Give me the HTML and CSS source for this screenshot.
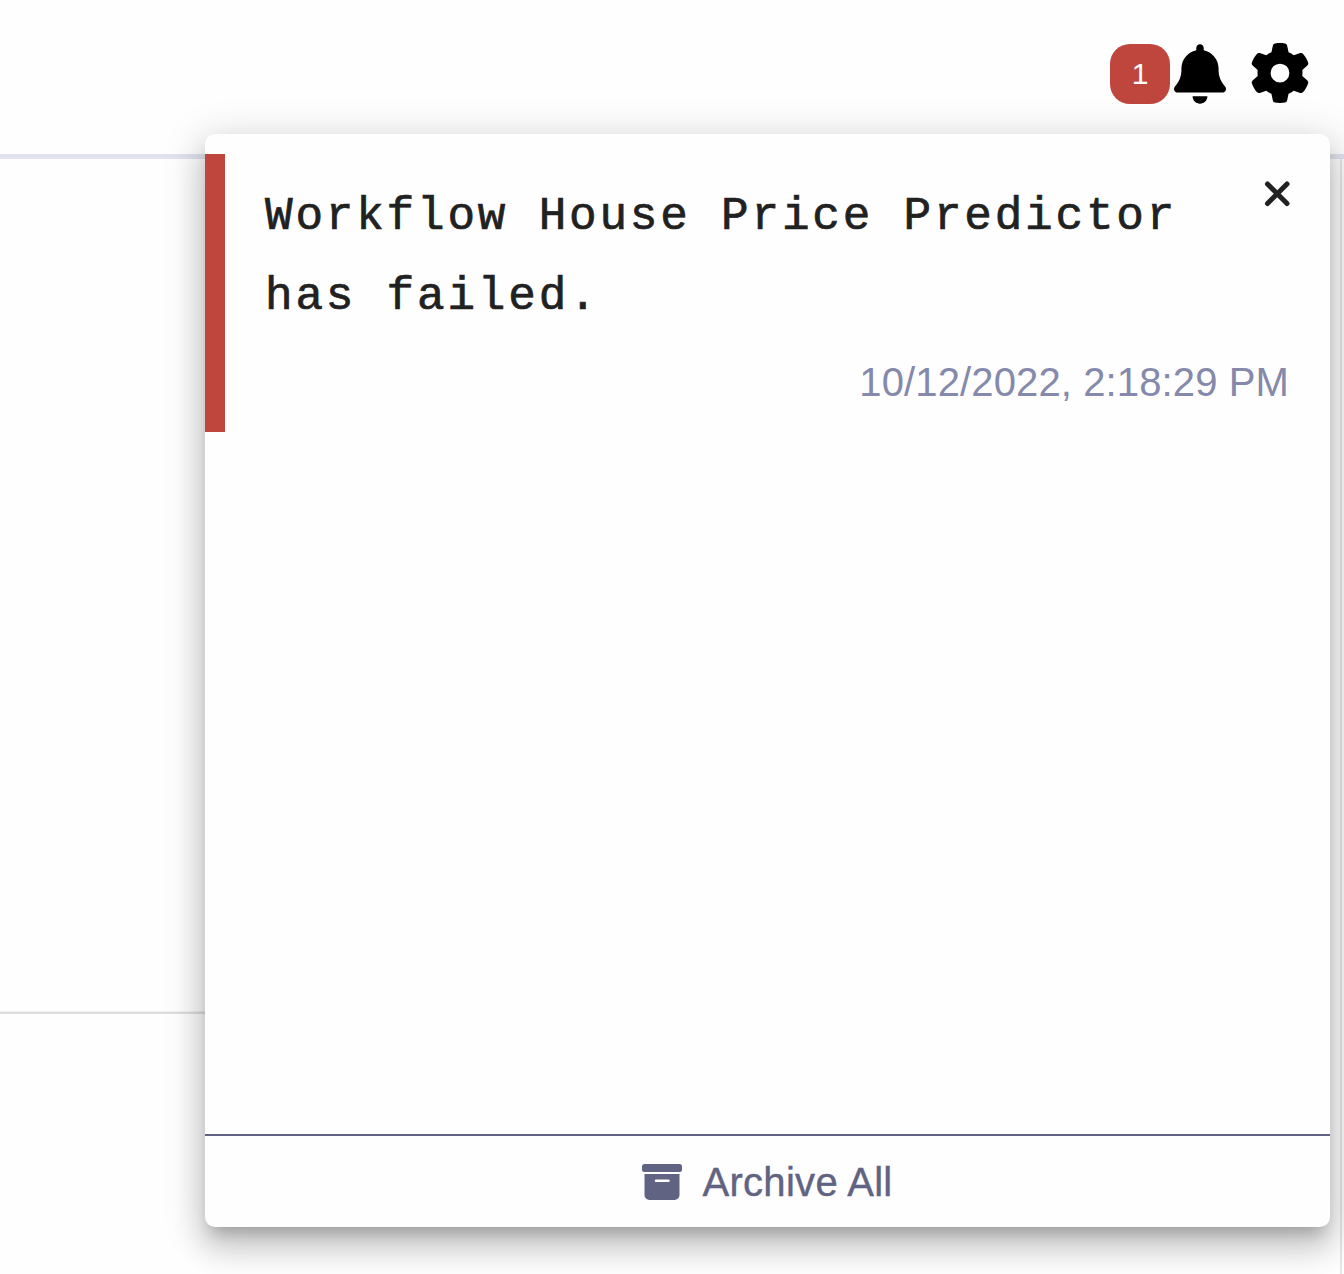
FILE: index.html
```html
<!DOCTYPE html>
<html lang="en">
<head>
<meta charset="utf-8">
<title>Notifications</title>
<link rel="stylesheet" href="styles.css">
</head>
<body>
<div class="page">
  <header class="toolbar">
    <button class="bell-button" aria-label="Notifications">
      <span class="badge">1</span>
      <svg class="bell" viewBox="0 0 448 512"><path d="M224 0c-17.7 0-32 14.3-32 32V51.2C119 66 64 130.6 64 208v18.8c0 47-17.3 92.4-48.5 127.6l-7.4 8.3c-8.4 9.4-10.4 22.9-5.3 34.4S19.4 416 32 416H416c12.6 0 24-7.4 29.2-18.9s3.1-25-5.3-34.4l-7.4-8.3C401.3 319.2 384 273.9 384 226.8V208c0-77.4-55-142-128-156.8V32c0-17.7-14.3-32-32-32zm45.3 493.3c12-12 18.7-28.3 18.7-45.3H224 160c0 17 6.7 33.3 18.7 45.3s28.3 18.7 45.3 18.7s33.3-6.7 45.3-18.7z"/></svg>
    </button>
    <button class="gear-button" aria-label="Settings">
      <svg class="gear" viewBox="0 0 512 512"><path d="M495.9 166.6c3.2 8.7 .5 18.4-6.4 24.6l-43.3 39.4c1.1 8.3 1.7 16.8 1.7 25.4s-.6 17.1-1.7 25.4l43.3 39.4c6.9 6.2 9.6 15.9 6.4 24.6c-4.4 11.9-9.7 23.3-15.8 34.3l-4.7 8.1c-6.6 11-14 21.4-22.1 31.2c-5.9 7.2-15.7 9.6-24.5 6.8l-55.7-17.7c-13.4 10.3-28.2 18.9-44 25.4l-12.5 57.1c-2 9.1-9 16.3-18.2 17.8c-13.8 2.3-28 3.5-42.5 3.5s-28.7-1.2-42.5-3.5c-9.2-1.5-16.2-8.7-18.2-17.8l-12.5-57.1c-15.8-6.5-30.6-15.1-44-25.4L83.1 425.9c-8.8 2.8-18.6 .3-24.5-6.8c-8.1-9.8-15.5-20.2-22.1-31.2l-4.7-8.1c-6.1-11-11.4-22.4-15.8-34.3c-3.2-8.7-.5-18.4 6.4-24.6l43.3-39.4C64.6 273.1 64 264.6 64 256s.6-17.1 1.7-25.4L22.4 191.2c-6.9-6.2-9.6-15.9-6.4-24.6c4.4-11.9 9.7-23.3 15.8-34.3l4.7-8.1c6.6-11 14-21.4 22.1-31.2c5.9-7.2 15.7-9.6 24.5-6.8l55.7 17.7c13.4-10.3 28.2-18.9 44-25.4l12.5-57.1c2-9.1 9-16.3 18.2-17.8C227.3 1.2 241.5 0 256 0s28.7 1.2 42.5 3.5c9.2 1.5 16.2 8.7 18.2 17.8l12.5 57.1c15.8 6.5 30.6 15.1 44 25.4l55.7-17.7c8.8-2.8 18.6-.3 24.5 6.8c8.1 9.8 15.5 20.2 22.1 31.2l4.7 8.1c6.1 11 11.4 22.4 15.8 34.3zM256 336a80 80 0 1 0 0-160 80 80 0 1 0 0 160z"/></svg>
    </button>
  </header>
  <main class="content">
    <div class="section"></div>
  </main>
  <section class="panel">
    <div class="list">
      <article class="notification">
        <div class="row">
          <p class="message">Workflow House Price Predictor has failed.</p>
          <button class="close" aria-label="Dismiss">
            <svg class="cross" viewBox="0 0 26 26"><path d="M3.500 3L23 22.500M23 3L3.500 22.500"/></svg>
          </button>
        </div>
        <time class="time">10/12/2022, 2:18:29 PM</time>
      </article>
    </div>
    <button class="archive">
      <svg class="box" viewBox="0 0 40 36"><rect width="40" height="8" rx="2.5"/><path fill-rule="evenodd" d="M2.500 10h35v21a5 5 0 0 1-5 5h-25a5 5 0 0 1-5-5zM14 15.500a1.250 1.250 0 0 0 0 2.500h12.500a1.250 1.250 0 0 0 0-2.500z"/></svg>
      <span class="archive-label">Archive All</span>
    </button>
  </section>
</div>
</body>
</html>
```
FILE: styles.css
```css
* { box-sizing: border-box; }
body {
  margin: 0;
  background: #fefefe;
  font-family: "Liberation Sans", Arial, sans-serif;
}
button {
  margin: 0;
  padding: 0;
  border: 0;
  background: none;
  font: inherit;
  color: inherit;
}
svg { display: block; }
.page {
  position: relative;
  display: flex;
  flex-direction: column;
  height: 1274px;
  overflow: hidden;
}
.toolbar {
  display: flex;
  justify-content: flex-end;
  align-items: flex-start;
  gap: 24px;
  height: 159px;
  padding: 43px 34px 0 0;
  border-bottom: 5px solid #e0e3ee;
}
.bell-button {
  display: flex;
  gap: 4px;
  padding-top: 1px;
}
.badge {
  display: flex;
  align-items: center;
  justify-content: center;
  width: 60px;
  height: 60px;
  border-radius: 20px;
  background: #bf463d;
  color: #fff;
  font-size: 30px;
}
.bell { width: 52px; height: 60px; }
.gear { width: 60px; height: 60px; }
.content {
  flex: 1;
  margin-right: 2px;
  border-right: 2px solid #e6e6e6;
}
.section {
  width: 50%;
  height: 855px;
  border-bottom: 2px solid #dedede;
  box-shadow: inset 0 -1px #f0f0f0;
}
.panel {
  position: absolute;
  top: 134px;
  left: 205px;
  display: flex;
  flex-direction: column;
  width: 1125px;
  height: 1093px;
  border-radius: 10px;
  background: #fefefe;
  box-shadow:
    0 12.5px 15px -7.5px rgba(0, 0, 0, .2),
    0 20px 30px 2.5px rgba(0, 0, 0, .14),
    0 7.5px 40px 5px rgba(0, 0, 0, .14);
}
.list { flex: 1; padding-top: 20px; }
.notification {
  display: flex;
  flex-direction: column;
  height: 278px;
  padding: 22px 40px 0;
  border-left: 20px solid #bf463d;
}
.row {
  display: flex;
  justify-content: space-between;
  align-items: flex-start;
}
.message {
  width: 940px;
  margin: 0;
  padding-top: 1px;
  font: 46px/80px "Liberation Mono", "Courier New", monospace;
  letter-spacing: 2.8px;
  color: #212121;
  -webkit-text-stroke: .7px #212121;
}
.close { padding-top: 5px; }
.cross {
  width: 26px;
  height: 26px;
  fill: none;
  stroke: #212121;
  stroke-width: 5;
  stroke-linecap: round;
}
.time {
  margin-top: 21px;
  padding-right: 1px;
  text-align: right;
  font-size: 40px;
  line-height: 48px;
  letter-spacing: .12px;
  color: #8589ab;
}
.archive {
  display: flex;
  align-items: center;
  justify-content: center;
  gap: 20px;
  height: 93px;
  border-top: 2px solid #606381;
  color: #606381;
  font-size: 40px;
}
.archive-label {
  padding-top: 1px;
  letter-spacing: .3px;
  -webkit-text-stroke: .4px #606381;
}
.box {
  width: 40px;
  height: 36px;
  fill: #606381;
}
```
